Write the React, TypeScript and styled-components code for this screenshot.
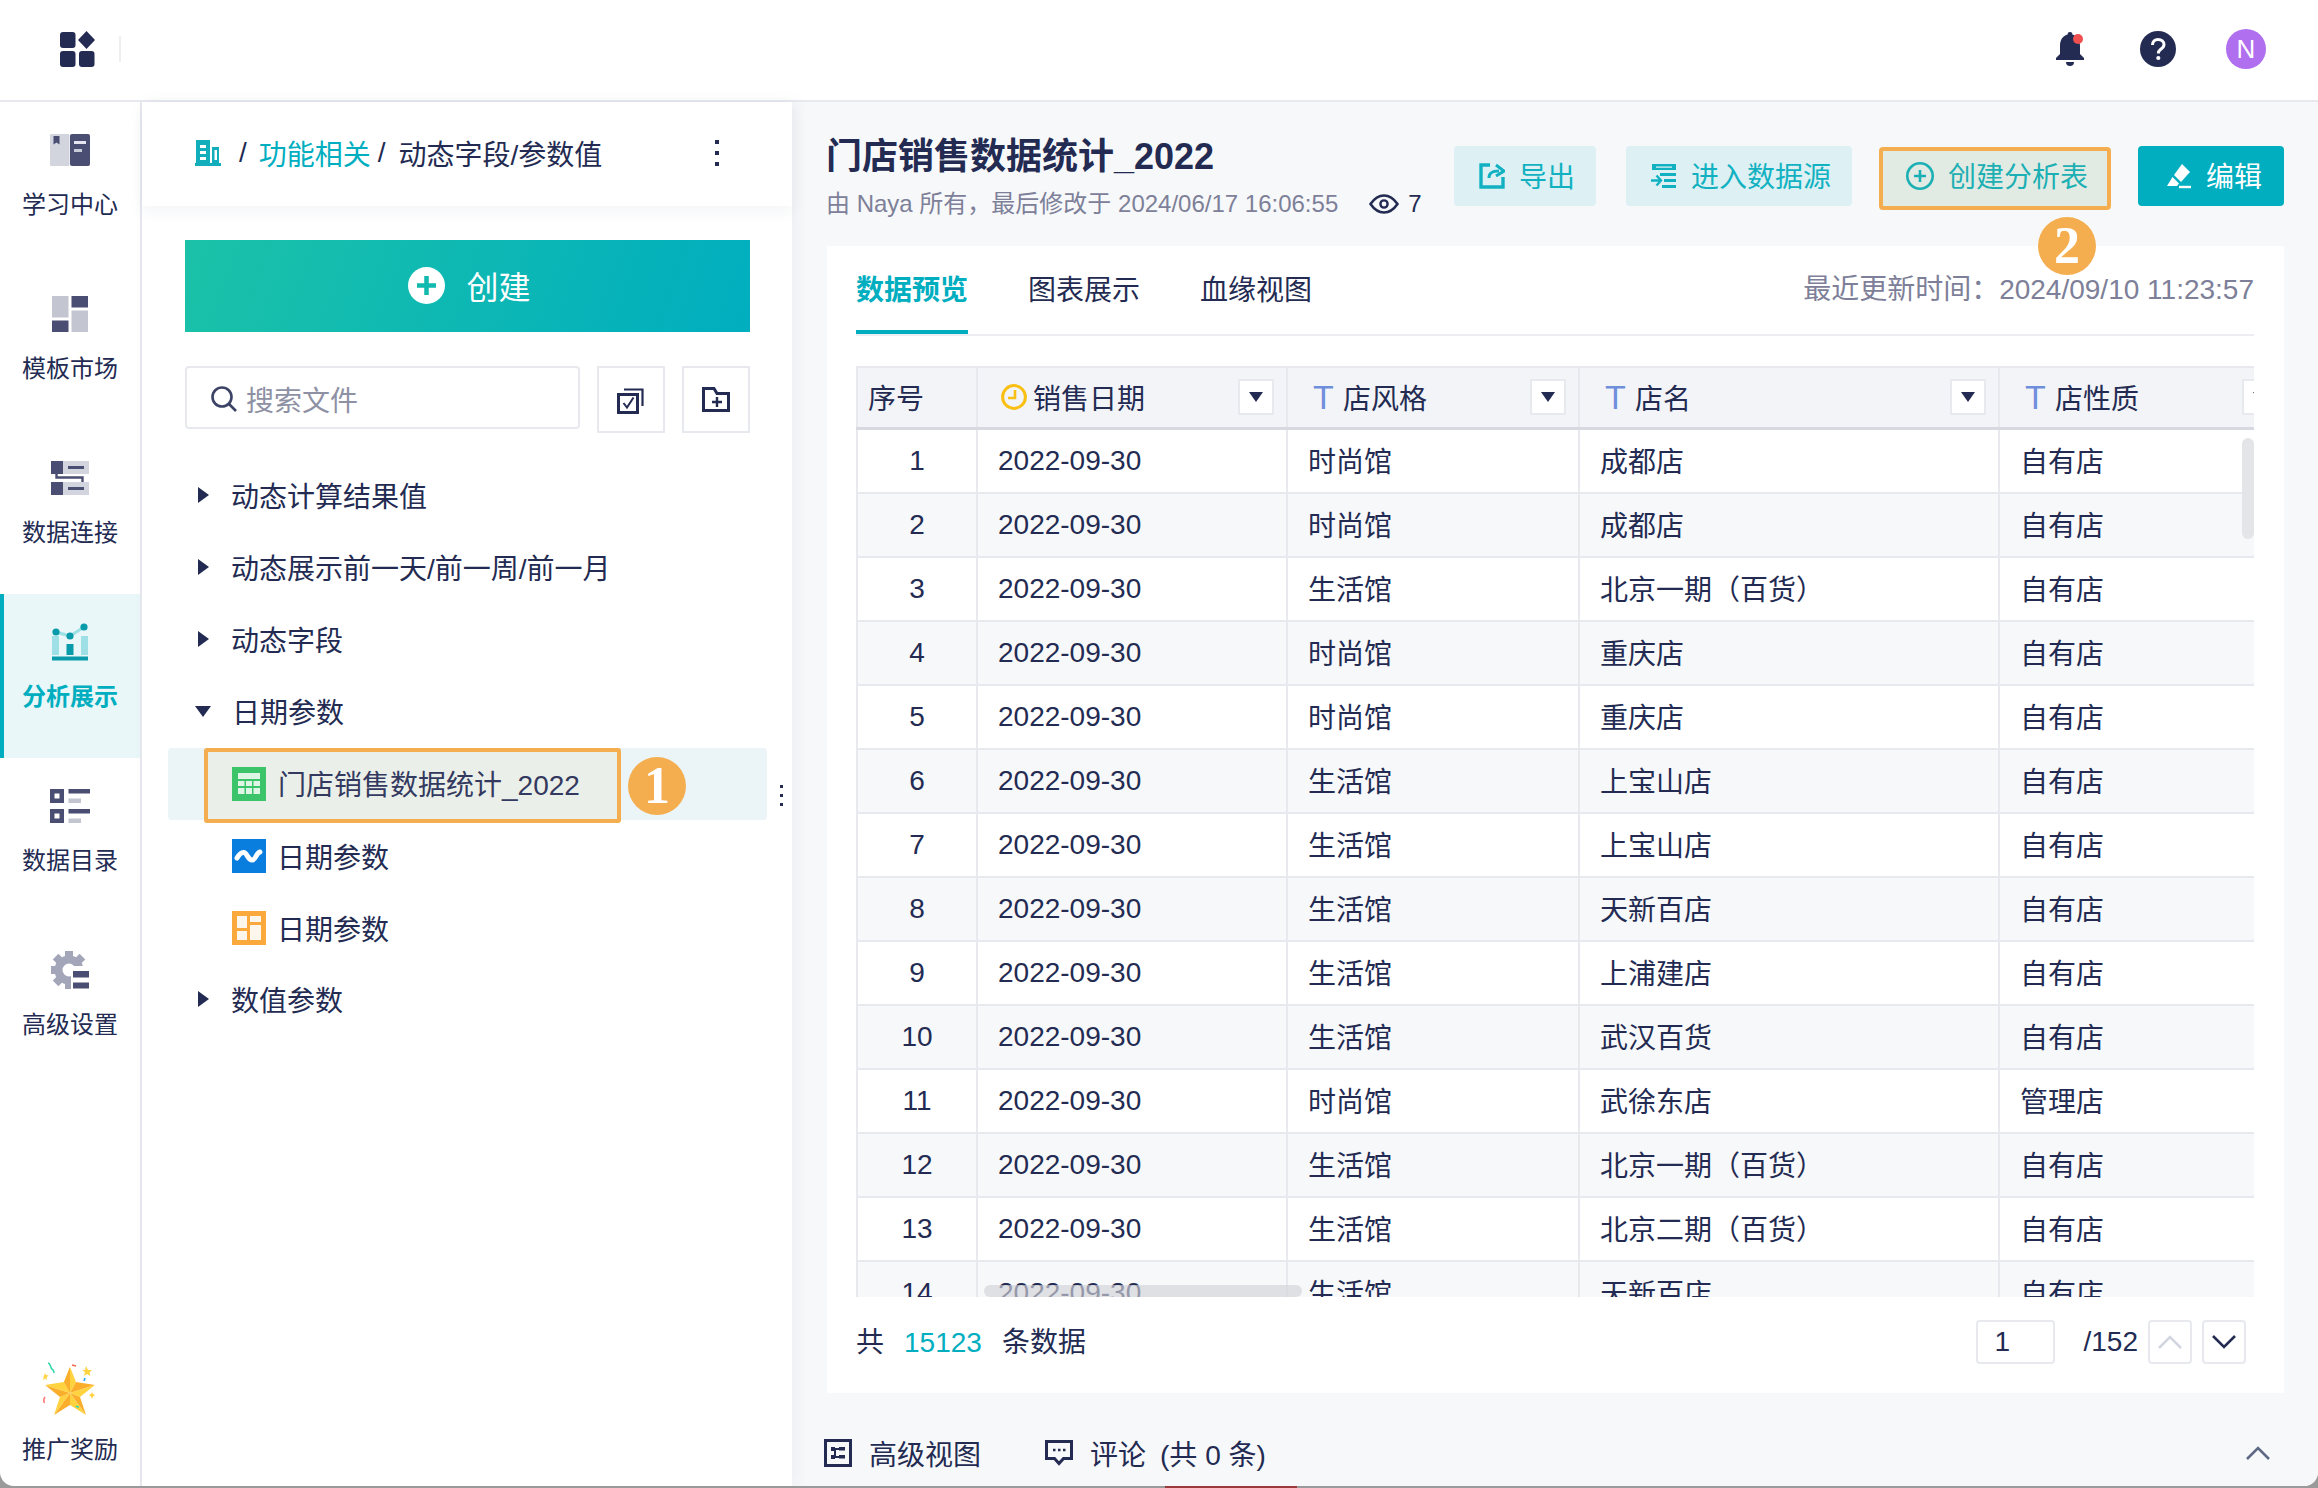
import React from 'react';
import styled, { createGlobalStyle } from 'styled-components';

const navy = '#232b52';
const teal = '#00aebf';
const line = '#e8e9ef';
const orange = '#f5ae4f';
const muted = '#7d8098';

const GlobalStyle = createGlobalStyle`
  html, body {
    margin: 0;
    width: 2318px;
    height: 1488px;
    overflow: hidden;
    background: #9a9a9a;
  }
  body {
    position: relative;
    font-family: "Liberation Sans", "Noto Sans CJK SC", sans-serif;
    font-size: 28px;
    color: ${navy};
  }
  * { box-sizing: border-box; }
`;

const DesktopSliver = styled.div`
  position: absolute;
  left: 1165px;
  bottom: 0;
  width: 132px;
  height: 2px;
  background: #9b3a3a;
`;

const Window = styled.div`
  position: relative;
  width: 2318px;
  height: 1486px;
  display: flex;
  flex-direction: column;
  background: #fff;
  border-radius: 0 0 14px 14px;
  overflow: hidden;
`;

const TopBar = styled.header`
  height: 102px;
  flex: none;
  display: flex;
  align-items: center;
  padding: 0 52px 2px 60px;
  border-bottom: 2px solid ${line};
`;

const LogoDivider = styled.div`
  width: 2px;
  height: 26px;
  margin-left: 24px;
  background: #eeeff3;
`;

const TopActions = styled.div`
  margin-left: auto;
  display: flex;
  align-items: center;
  gap: 50px;
`;

const BellWrap = styled.div`
  display: flex;
  margin-right: 4px;
`;

const Avatar = styled.div`
  width: 40px;
  height: 40px;
  border-radius: 50%;
  background: #b06fee;
  color: #fff;
  font-size: 26px;
  display: flex;
  align-items: center;
  justify-content: center;
`;

const Body = styled.div`
  flex: 1;
  display: flex;
  min-height: 0;
`;

const Sidebar = styled.nav`
  width: 142px;
  flex: none;
  display: flex;
  flex-direction: column;
  border-right: 2px solid ${line};
`;

const NavItem = styled.div<{ $active?: boolean }>`
  height: 164px;
  display: flex;
  flex-direction: column;
  align-items: center;
  gap: 20px;
  padding-top: 28px;
  font-size: 24px;
  line-height: 30px;
  color: ${p => (p.$active ? teal : navy)};
  font-weight: ${p => (p.$active ? 700 : 400)};
  background: ${p => (p.$active ? '#e9f7f9' : 'transparent')};
  border-left: 4px solid ${p => (p.$active ? teal : 'transparent')};
  padding-right: 4px;
`;

const NavIcon = styled.div`
  height: 40px;
  display: flex;
  align-items: center;
  justify-content: center;
`;

const PromoItem = styled.div`
  margin-top: auto;
  display: flex;
  flex-direction: column;
  align-items: center;
  gap: 17px;
  padding-bottom: 21px;
  font-size: 24px;
  line-height: 30px;
`;

const Panel = styled.aside`
  position: relative;
  z-index: 1;
  width: 650px;
  flex: none;
  background: #fff;
  box-shadow: 4px 0 14px rgba(40, 50, 90, 0.05);
`;

const Crumbs = styled.div`
  height: 104px;
  display: flex;
  align-items: center;
  padding: 0 73px 2px 53px;
  font-size: 28px;
  box-shadow: 0 6px 14px rgba(40, 50, 90, 0.05);
`;

const CrumbSep = styled.span<{ $left: number; $right: number }>`
  margin: 0 ${p => p.$right}px 0 ${p => p.$left}px;
`;

const CrumbLink = styled.span`
  color: ${teal};
`;

const Kebab = styled.div<{ $small?: boolean }>`
  display: flex;
  flex-direction: column;
  gap: ${p => (p.$small ? 6 : 7)}px;
  i {
    display: block;
    width: ${p => (p.$small ? 3 : 4)}px;
    height: ${p => (p.$small ? 3 : 4)}px;
    background: ${navy};
  }
`;

const CrumbMenu = styled(Kebab)`
  margin-left: auto;
`;

const CreateButton = styled.div`
  height: 92px;
  margin: 34px 42px 0 43px;
  display: flex;
  align-items: center;
  justify-content: center;
  gap: 21px;
  padding: 0 0 2px 4px;
  font-size: 32px;
  color: #fff;
  background: linear-gradient(110deg, #1bc2a8 0%, #00aebf 100%);
`;

const Toolbar = styled.div`
  height: 67px;
  margin: 34px 42px 0 43px;
  display: flex;
  gap: 17px;
  align-items: flex-start;
`;

const SearchBox = styled.div`
  width: 395px;
  height: 63px;
  display: flex;
  align-items: center;
  gap: 9px;
  padding: 2px 0 0 24px;
  border: 2px solid ${line};
  border-radius: 4px;
  color: #8e91a3;
`;

const ToolButton = styled.div`
  width: 68px;
  height: 67px;
  display: flex;
  align-items: center;
  justify-content: center;
  border: 2px solid ${line};
`;

const Tree = styled.div`
  margin-top: 27px;
`;

const TreeRow = styled.div<{ $open?: boolean }>`
  height: 72px;
  display: flex;
  align-items: center;
  gap: ${p => (p.$open ? 21 : 22)}px;
  padding: 0 0 2px ${p => (p.$open ? 53 : 56)}px;
  color: ${navy};
`;

const ArrowRight = styled.div`
  width: 0;
  height: 0;
  border-left: 11px solid ${navy};
  border-top: 8px solid transparent;
  border-bottom: 8px solid transparent;
`;

const ArrowDown = styled.div`
  width: 0;
  height: 0;
  border-top: 11px solid ${navy};
  border-left: 8.5px solid transparent;
  border-right: 8.5px solid transparent;
`;

const ChildRow = styled.div`
  height: 72px;
  display: flex;
  align-items: center;
  gap: 11px;
  padding-left: 90px;
`;

const SelectedRow = styled.div`
  position: relative;
  width: 599px;
  height: 72px;
  margin-left: 26px;
  display: flex;
  align-items: flex-start;
  gap: 7px;
  padding-left: 36px;
  background: #ebf4f7;
  border-radius: 4px;
`;

const Highlight = styled.div`
  width: 417px;
  height: 75px;
  flex: none;
  display: flex;
  align-items: center;
  gap: 12px;
  padding: 0 0 3px 24px;
  background: #ebefe9;
  border: 4px solid ${orange};
  border-radius: 3px;
  color: #33395f;
`;

const HighlightLabel = styled.span`
  padding-bottom: 2px;
`;

const Marker = styled.div`
  width: 58px;
  height: 58px;
  flex: none;
  border-radius: 50%;
  background: ${orange};
  color: #fff;
  font-family: "Liberation Serif", serif;
  font-size: 52px;
  font-weight: 700;
  line-height: 58px;
  text-align: center;
`;

const RowMarker = styled(Marker)`
  margin-top: 9px;
`;

const FloatingMarker = styled(Marker)`
  position: absolute;
  z-index: 2;
  left: 2038px;
  top: 217px;
`;

const RowKebab = styled(Kebab)`
  position: absolute;
  left: 612px;
  top: 37px;
`;

const Main = styled.main`
  flex: 1;
  min-width: 0;
  display: flex;
  flex-direction: column;
  padding: 0 34px 0 35px;
  background: #f7f8fa;
`;

const MainHeader = styled.div`
  height: 144px;
  flex: none;
  display: flex;
  align-items: flex-start;
`;

const TitleBlock = styled.div`
  margin-left: -1px;
  padding-top: 36px;
`;

const Title = styled.h1`
  margin: 0;
  font-size: 36px;
  line-height: 38px;
  font-weight: 700;
`;

const Meta = styled.div`
  margin-top: 13px;
  display: flex;
  align-items: center;
  font-size: 24px;
  line-height: 30px;
  color: ${muted};
`;

const Views = styled.span`
  margin-left: 31px;
  display: flex;
  align-items: center;
  gap: 9px;
  color: ${navy};
`;

const Actions = styled.div`
  margin-left: auto;
  padding-top: 44px;
  display: flex;
  align-items: flex-start;
  gap: 27px;
`;

const ActionButton = styled.div`
  height: 60px;
  display: flex;
  align-items: center;
  gap: 14px;
  padding: 0 21px 0 25px;
  border-radius: 4px;
  background: #ddf1f4;
  color: #12b1c1;
`;

const ActionLabel = styled.span`
  padding-bottom: 3px;
`;

const WideAction = styled(ActionButton)`
  margin-left: 3px;
`;

const MarkedAction = styled(ActionButton)`
  height: 63px;
  margin-top: 1px;
  padding: 0 19px 5px 23px;
  background: #e2ebe3;
  border: 4px solid ${orange};
  color: #1cafb3;
`;

const PrimaryAction = styled(ActionButton)`
  padding-left: 28px;
  padding-right: 22px;
  background: ${teal};
  color: #fff;
`;

const Card = styled.section`
  height: 1147px;
  flex: none;
  display: flex;
  flex-direction: column;
  padding: 0 30px 0 29px;
  background: #fff;
`;

const TabBar = styled.div`
  height: 90px;
  flex: none;
  display: flex;
  align-items: flex-start;
  gap: 60px;
  border-bottom: 2px solid #eceef2;
`;

const Tab = styled.div<{ $active?: boolean }>`
  height: 88px;
  display: flex;
  align-items: center;
  border-bottom: 4px solid ${p => (p.$active ? teal : 'transparent')};
  color: ${p => (p.$active ? teal : navy)};
  font-weight: ${p => (p.$active ? 700 : 400)};
`;

const UpdatedAt = styled.div`
  height: 88px;
  margin-left: auto;
  display: flex;
  align-items: center;
  padding-bottom: 6px;
  color: ${muted};
`;

const TableWrap = styled.div`
  position: relative;
  height: 931px;
  margin-top: 30px;
  flex: none;
  overflow: hidden;
`;

const HeadRow = styled.div`
  width: 1436px;
  height: 64px;
  display: flex;
  background: #f3f4f8;
  border-top: 2px solid ${line};
  border-bottom: 3px solid #d8d9e0;
`;

const DataRow = styled.div<{ $shade: boolean }>`
  width: 1436px;
  height: 64px;
  display: flex;
  background: ${p => (p.$shade ? '#f7f8fa' : '#fff')};
  border-bottom: 2px solid ${line};
`;

const Cell = styled.div<{ $width: number; $center?: boolean; $cjk?: boolean }>`
  width: ${p => p.$width}px;
  flex: none;
  display: flex;
  align-items: center;
  justify-content: ${p => (p.$center ? 'center' : 'flex-start')};
  padding-left: ${p => (p.$center ? 0 : 20)}px;
  padding-bottom: ${p => (p.$cjk ? 3 : 1)}px;
  border-right: 2px solid ${line};
  &:first-child {
    border-left: 2px solid ${line};
  }
`;

const HeadCell = styled(Cell)<{ $pad?: number }>`
  padding-left: ${p => p.$pad ?? 25}px;
  padding-right: 12px;
  gap: 8px;
`;

const ClockWrap = styled.span`
  display: flex;
  margin-right: -2px;
`;

const TypeT = styled.span`
  width: 22px;
  font-size: 34px;
  line-height: 34px;
  color: #6f8fdc;
`;

const HeadFilter = styled.div`
  width: 36px;
  height: 36px;
  flex: none;
  margin-left: auto;
  display: flex;
  align-items: center;
  justify-content: center;
  background: #fff;
  border: 2px solid ${line};
`;

const FilterArrow = styled.div`
  width: 0;
  height: 0;
  border-top: 10px solid ${navy};
  border-left: 7px solid transparent;
  border-right: 7px solid transparent;
`;

const ScrollY = styled.div`
  position: absolute;
  top: 72px;
  right: 0;
  width: 12px;
  height: 101px;
  border-radius: 6px;
  background: #e4e5e9;
`;

const ScrollX = styled.div`
  position: absolute;
  left: 128px;
  bottom: 0;
  width: 318px;
  height: 12px;
  border-radius: 6px;
  background: rgba(210, 211, 216, 0.65);
`;

const Footer = styled.div`
  flex: none;
  display: flex;
  align-items: flex-start;
  gap: 20px;
  padding: 23px 8px 0 0;
  line-height: 46px;
`;

const Count = styled.span`
  color: ${teal};
`;

const Pager = styled.div`
  margin-left: auto;
  display: flex;
  align-items: center;
`;

const PageInput = styled.div`
  width: 79px;
  height: 44px;
  margin-right: 29px;
  padding-left: 17px;
  line-height: 40px;
  border: 2px solid ${line};
  border-radius: 4px;
`;

const PageTotal = styled.span`
  margin-right: 10px;
  line-height: 44px;
`;

const PageButton = styled.div`
  width: 44px;
  height: 44px;
  margin-right: 10px;
  display: flex;
  align-items: center;
  justify-content: center;
  border: 2px solid ${line};
  border-radius: 4px;
  &:last-child {
    margin-right: 0;
  }
`;

const BottomBar = styled.div`
  display: flex;
  align-items: center;
  height: 28px;
  margin: 46px 14px 0 -3px;
`;

const BottomItem = styled.div`
  display: flex;
  align-items: center;
  gap: 17px;
  margin-right: 64px;
`;

const CommentCount = styled.span`
  padding-left: 14px;
`;

const BottomToggle = styled.div`
  margin-left: auto;
  display: flex;
`;

const LogoIcon = () => (
  <svg width="35" height="36" viewBox="0 0 35 36">
    <g fill={navy}>
      <rect x="0" y="1" width="15.5" height="16" rx="3" />
      <path d="M26.5 0 L35 9 L26.5 18 L18 9 Z" />
      <rect x="0" y="20" width="15.5" height="16" rx="3" />
      <rect x="19" y="20" width="15.5" height="16" rx="3" />
    </g>
  </svg>
);

const BellIcon = () => (
  <svg width="30" height="34" viewBox="0 0 30 34">
    <path d="M14 0 a2.4 2.4 0 0 1 2.4 2.6 C22 4 24 9 24 14 L24 22 L28 26 L28 28 L0 28 L0 26 L4 22 L4 14 C4 9 6 4 11.6 2.6 A2.4 2.4 0 0 1 14 0 Z" fill={navy} />
    <path d="M10 30 L18 30 A4 4 0 0 1 10 30 Z" fill={navy} />
    <circle cx="22" cy="7" r="5" fill="#ef4f4f" />
  </svg>
);

const HelpIcon = () => (
  <svg width="36" height="36" viewBox="0 0 36 36">
    <circle cx="18" cy="18" r="18" fill={navy} />
    <path d="M12.5 14 C12.5 10.5 15 8.5 18 8.5 C21.5 8.5 24 10.5 24 13.6 C24 16.5 21.8 17.6 20.2 18.8 C19 19.7 18.4 20.4 18.4 22.6" fill="none" stroke="#fff" strokeWidth="3" />
    <circle cx="18.3" cy="27" r="2.1" fill="#fff" />
  </svg>
);

const dark = '#4a4e72';
const pale = '#d2d4de';
const paler = '#c3c5d1';

const LearnIcon = () => (
  <svg width="40" height="32" viewBox="0 0 40 32">
    <rect x="0" y="0" width="19.5" height="32" rx="1" fill={pale} />
    <path d="M3.5 2 H9.5 V10.5 L6.5 8.5 L3.5 10.5 Z" fill={dark} />
    <rect x="20" y="0" width="20" height="32" rx="2" fill={dark} />
    <rect x="24" y="7" width="12" height="3" fill="#e6e7ee" />
    <rect x="24" y="15" width="8" height="3" fill="#c9cbd8" />
  </svg>
);

const MarketIcon = () => (
  <svg width="36" height="36" viewBox="0 0 36 36">
    <rect x="0" y="0" width="16.5" height="21.5" fill={paler} />
    <rect x="19.5" y="0" width="16.5" height="11.5" fill={dark} />
    <rect x="0" y="24.5" width="16.5" height="11.5" fill={dark} />
    <rect x="19.5" y="14.5" width="16.5" height="21.5" fill={paler} />
  </svg>
);

const ConnectIcon = () => (
  <svg width="38" height="34" viewBox="0 0 38 34">
    <rect x="0" y="0" width="38" height="13" fill={pale} />
    <rect x="0" y="21" width="38" height="13" fill={pale} />
    <rect x="0" y="0" width="12" height="13" fill={dark} />
    <rect x="0" y="21" width="12" height="13" fill={dark} />
    <rect x="17" y="5" width="16" height="3" fill={dark} />
    <rect x="17" y="26" width="16" height="3" fill={dark} />
    <path d="M5.5 13 V16.5 H31.5 V21" fill="none" stroke={dark} strokeWidth="2.4" />
  </svg>
);

const AnalysisIcon = () => (
  <svg width="36" height="38" viewBox="0 0 36 38">
    <rect x="0" y="13" width="7" height="19" fill="#9fe0e6" />
    <rect x="14.5" y="21" width="7" height="11" fill="#0a9bab" />
    <rect x="29" y="13" width="7" height="19" fill="#9fe0e6" />
    <rect x="0" y="33.5" width="36" height="4" fill="#0a9bab" />
    <path d="M4 9 L18 13 L32 4" fill="none" stroke="#9fe0e6" strokeWidth="3" />
    <circle cx="4" cy="9" r="3.6" fill="#0a9bab" />
    <circle cx="18" cy="13" r="3.6" fill="#0a9bab" />
    <circle cx="32" cy="4" r="3.6" fill="#0a9bab" />
  </svg>
);

const CatalogIcon = () => (
  <svg width="40" height="34" viewBox="0 0 40 34">
    <path d="M0 0 H14 V14 H0 Z M4.5 4.5 V9.5 H9.5 V4.5 Z" fill={dark} fillRule="evenodd" />
    <path d="M0 20 H14 V34 H0 Z M4.5 24.5 V29.5 H9.5 V24.5 Z" fill={dark} fillRule="evenodd" />
    <rect x="18.5" y="0" width="21.5" height="4.5" fill={dark} />
    <rect x="18.5" y="9.5" width="12.5" height="4.5" fill={paler} />
    <rect x="18.5" y="20" width="21.5" height="4.5" fill={dark} />
    <rect x="18.5" y="29.5" width="12.5" height="4.5" fill={paler} />
  </svg>
);

const SettingsIcon = () => (
  <svg width="38" height="38" viewBox="0 0 38 38">
    <g fill="#a3a6b8">
      {[0, 45, 90, 135, 180, 225, 270, 315].map(a => (
        <rect key={a} x="14" y="0" width="8" height="7" transform={`rotate(${a} 18 19)`} />
      ))}
    </g>
    <circle cx="18" cy="19" r="10.5" fill="none" stroke="#a3a6b8" strokeWidth="8" />
    <rect x="20" y="15" width="18" height="23" fill="#fff" />
    <rect x="22" y="20" width="16" height="6.5" fill={dark} />
    <rect x="22" y="31.5" width="16" height="6" fill={dark} />
  </svg>
);

const StarIcon = () => (
  <svg width="54" height="56" viewBox="0 0 54 56">
    <path d="M27 5 L33 20 L27 31 L21 20 Z" fill="#ffd23f" />
    <path d="M33 20 L52 23 L27 31 Z" fill="#fbae2c" />
    <path d="M52 23 L37 35 L27 31 Z" fill="#ffd23f" />
    <path d="M37 35 L43 53 L27 31 Z" fill="#fbae2c" />
    <path d="M43 53 L27 43 L27 31 Z" fill="#ffd23f" />
    <path d="M27 43 L11 53 L27 31 Z" fill="#fbae2c" />
    <path d="M11 53 L17 35 L27 31 Z" fill="#ffd23f" />
    <path d="M17 35 L2 23 L27 31 Z" fill="#fbae2c" />
    <path d="M2 23 L21 20 L27 31 Z" fill="#ffd23f" />
    <path d="M27 5 L21 20 L27 31 Z" fill="#fbae2c" />
    <path d="M5 1 C9 2 6 6 10 8 C11 9 11 10 11 11" fill="none" stroke="#2ed8a8" strokeWidth="1.6" />
    <path d="M29 3 L33 4" fill="none" stroke="#f0684e" strokeWidth="1.6" />
    <path d="M43 4 L45 8 L49 8 L46.5 10.5 L47.5 14 L44 12 L41 14 L42 10 L39 8 L42 8 Z" fill="#ffd23f" />
    <path d="M2 11 L3 13 L5.5 13.5 L3.5 15.5 L4 18 L2 16.5 L0 18 L0.5 15.5 Z" fill="#ffd23f" />
    <path d="M42 16 L41 19" fill="none" stroke="#2aa7ee" strokeWidth="1.6" />
    <path d="M2 35 C0.5 37 0.5 39 1.5 41" fill="none" stroke="#f77" strokeWidth="1.6" />
    <path d="M49 30 L50 32 L52 33 L50 34.5 L49 37 L48 34.5 L46 33 L48 32 Z" fill="#ffd23f" />
    <path d="M33 44 C34 45 35 45 36 45" fill="none" stroke="#2ed8a8" strokeWidth="1.6" />
  </svg>
);

const HomeIcon = () => (
  <svg width="26" height="26" viewBox="0 0 26 26">
    <path d="M1 0 H15 V23 H26 V26 H0 V23 H1 Z M5 5 V8 H11 V5 Z M5 11 V14 H11 V11 Z M5 17 V20 H11 V17 Z" fill="#12aebb" fillRule="evenodd" />
    <rect x="17" y="7" width="7" height="16" fill="#12aebb" />
    <rect x="19.5" y="10" width="2.5" height="10" fill="#fff" />
  </svg>
);

const PlusDisc = () => (
  <svg width="37" height="37" viewBox="0 0 37 37">
    <circle cx="18.5" cy="18.5" r="18.5" fill="#fff" />
    <path d="M18.5 9 V28 M9 18.5 H28" stroke="#11b9ae" strokeWidth="4.5" />
  </svg>
);

const SearchIcon = () => (
  <svg width="26" height="26" viewBox="0 0 26 26">
    <circle cx="11" cy="11" r="9.5" fill="none" stroke="#3c4366" strokeWidth="2.6" />
    <path d="M18 18 L25 25" stroke="#3c4366" strokeWidth="2.6" />
  </svg>
);

const CheckCopyIcon = () => (
  <svg width="28" height="28" viewBox="0 0 28 28">
    <rect x="1.5" y="8.5" width="19" height="18" fill="none" stroke={navy} strokeWidth="3" />
    <path d="M6.5 17 L10 21.5 L16.5 11.5" fill="none" stroke={navy} strokeWidth="2" />
    <path d="M7 3.5 H25.5 V20" fill="none" stroke={navy} strokeWidth="2.2" />
  </svg>
);

const FolderPlusIcon = () => (
  <svg width="28" height="25" viewBox="0 0 28 25">
    <path d="M1.5 1.5 H12 L15 6.5 H26.5 V23.5 H1.5 Z" fill="none" stroke={navy} strokeWidth="3" />
    <path d="M15 10 V20 M10 15 H20" stroke={navy} strokeWidth="2.4" />
  </svg>
);

const SheetIcon = () => (
  <svg width="34" height="34" viewBox="0 0 34 34">
    <rect width="34" height="34" fill="#3bc46a" />
    <rect x="6" y="6" width="22" height="6" fill="#dff5e6" />
    <path d="M6 14 H12.5 V19 H6 Z M14 14 H20 V19 H14 Z M21.5 14 H28 V19 H21.5 Z M6 21 H12.5 V27 H6 Z M14 21 H20 V27 H14 Z M21.5 21 H28 V27 H21.5 Z" fill="#dff5e6" />
  </svg>
);

const ChartIcon = () => (
  <svg width="34" height="34" viewBox="0 0 34 34">
    <rect width="34" height="34" fill="#0a7ede" />
    <path d="M5 19 C8 14 10 13 12 13.5 C15 14 16 21 20 21 C24 21 24 14 28 13" fill="none" stroke="#fff" strokeWidth="5" strokeLinecap="round" />
  </svg>
);

const BoardIcon = () => (
  <svg width="34" height="34" viewBox="0 0 34 34">
    <rect width="34" height="34" fill="#fba83c" />
    <rect x="5" y="5" width="10" height="12" fill="#fdf6ec" />
    <rect x="18" y="5" width="11" height="6" fill="#fdf6ec" />
    <rect x="5" y="20" width="10" height="9" fill="#fdf6ec" />
    <rect x="18" y="14" width="11" height="15" fill="#fdf6ec" />
  </svg>
);

const EyeIcon = () => (
  <svg width="30" height="20" viewBox="0 0 30 20">
    <path d="M1.5 10 C6 3.5 10 1.5 15 1.5 C20 1.5 24 3.5 28.5 10 C24 16.5 20 18.5 15 18.5 C10 18.5 6 16.5 1.5 10 Z" fill="none" stroke={navy} strokeWidth="2.6" />
    <circle cx="15" cy="10" r="3.6" fill="none" stroke={navy} strokeWidth="2.4" />
  </svg>
);

const ExportIcon = () => (
  <svg width="26" height="26" viewBox="0 0 26 26">
    <path d="M11 2 H2 V24 H24 V14" fill="none" stroke="#12b1c1" strokeWidth="3.4" />
    <path d="M10 15 C10 10 13 8 20 8" fill="none" stroke="#12b1c1" strokeWidth="3" />
    <path d="M17 2 L25 8 L17 13" fill="none" stroke="#12b1c1" strokeWidth="3" />
  </svg>
);

const SourceIcon = () => (
  <svg width="26" height="26" viewBox="0 0 26 26">
    <path d="M1 1 H25 V7 H1 Z M5 3.4 V4.8 H21 V3.4 Z" fill="#12b1c1" fillRule="evenodd" />
    <rect x="9" y="10" width="16" height="3" fill="#12b1c1" />
    <rect x="13" y="16" width="12" height="3" fill="#12b1c1" />
    <rect x="11" y="22" width="14" height="3" fill="#12b1c1" />
    <path d="M0 17.5 H9 M5.5 12.5 L10 17.5 L5.5 22.5" fill="none" stroke="#12b1c1" strokeWidth="2.4" />
  </svg>
);

const PlusCircleIcon = () => (
  <svg width="28" height="28" viewBox="0 0 28 28">
    <circle cx="14" cy="14" r="12.7" fill="none" stroke="#1cafb3" strokeWidth="2.6" />
    <path d="M14 8 V20 M8 14 H20" stroke="#1cafb3" strokeWidth="2.6" />
  </svg>
);

const EditIcon = () => (
  <svg width="26" height="26" viewBox="0 0 26 26">
    <path d="M16 1 L24 9 L15 19 L8 12 Z" fill="#fff" />
    <path d="M6.5 14 L13 20.5 L11 23 L1 23 Z" fill="#fff" />
    <path d="M13 24 H25" stroke="#fff" strokeWidth="2.4" />
  </svg>
);

const ClockIcon = () => (
  <svg width="26" height="26" viewBox="0 0 26 26">
    <circle cx="13" cy="13" r="11.4" fill="none" stroke="#f9bf12" strokeWidth="3" />
    <path d="M14 6 V14 H7" fill="none" stroke="#f9bf12" strokeWidth="2.6" />
  </svg>
);

const ViewTreeIcon = () => (
  <svg width="28" height="28" viewBox="0 0 28 28">
    <rect x="1.5" y="1.5" width="25" height="25" fill="none" stroke={navy} strokeWidth="3" />
    <rect x="7" y="8" width="4" height="4" fill={navy} />
    <rect x="7" y="16" width="4" height="4" fill={navy} />
    <rect x="15" y="8" width="6" height="3.5" fill={navy} />
    <rect x="15" y="16" width="6" height="3.5" fill={navy} />
    <path d="M9 10 H15 M9 18 H15 M11 10 V18" stroke={navy} strokeWidth="2" />
  </svg>
);

const CommentIcon = () => (
  <svg width="28" height="26" viewBox="0 0 28 26">
    <path d="M1.5 1.5 H26.5 V18.5 H18.5 L14 23.5 L9.5 18.5 H1.5 Z" fill="none" stroke={navy} strokeWidth="3" />
    <path d="M8 10 H10.5 M13 10 H15.5 M18 10 H20.5" stroke={navy} strokeWidth="2.6" />
  </svg>
);

const Chevron = ({ up, color }: { up?: boolean; color: string }) => (
  <svg width="24" height="14" viewBox="0 0 24 14">
    <path d={up ? 'M1 13 L12 2 L23 13' : 'M1 1 L12 12 L23 1'} fill="none" stroke={color} strokeWidth="2.6" />
  </svg>
);

const navItems = [
  { label: '学习中心', icon: <LearnIcon /> },
  { label: '模板市场', icon: <MarketIcon /> },
  { label: '数据连接', icon: <ConnectIcon /> },
  { label: '分析展示', icon: <AnalysisIcon />, active: true },
  { label: '数据目录', icon: <CatalogIcon /> },
  { label: '高级设置', icon: <SettingsIcon /> },
];

const columnWidths = [122, 310, 292, 420, 292];

const rows = [
  ['时尚馆', '成都店', '自有店'],
  ['时尚馆', '成都店', '自有店'],
  ['生活馆', '北京一期（百货）', '自有店'],
  ['时尚馆', '重庆店', '自有店'],
  ['时尚馆', '重庆店', '自有店'],
  ['生活馆', '上宝山店', '自有店'],
  ['生活馆', '上宝山店', '自有店'],
  ['生活馆', '天新百店', '自有店'],
  ['生活馆', '上浦建店', '自有店'],
  ['生活馆', '武汉百货', '自有店'],
  ['时尚馆', '武徐东店', '管理店'],
  ['生活馆', '北京一期（百货）', '自有店'],
  ['生活馆', '北京二期（百货）', '自有店'],
  ['生活馆', '天新百店', '自有店'],
];

const Dots = () => (
  <>
    <i />
    <i />
    <i />
  </>
);

export default function App() {
  return (
    <>
      <GlobalStyle />
      <DesktopSliver />
      <Window>
        <TopBar>
          <LogoIcon />
          <LogoDivider />
          <TopActions>
            <BellWrap>
              <BellIcon />
            </BellWrap>
            <HelpIcon />
            <Avatar>N</Avatar>
          </TopActions>
        </TopBar>
        <FloatingMarker>2</FloatingMarker>
        <Body>
          <Sidebar>
            {navItems.map(item => (
              <NavItem key={item.label} $active={item.active}>
                <NavIcon>{item.icon}</NavIcon>
                {item.label}
              </NavItem>
            ))}
            <PromoItem>
              <StarIcon />
              推广奖励
            </PromoItem>
          </Sidebar>
          <Panel>
            <Crumbs>
              <HomeIcon />
              <CrumbSep $left={18} $right={12}>/</CrumbSep>
              <CrumbLink>功能相关</CrumbLink>
              <CrumbSep $left={7} $right={13}>/</CrumbSep>
              动态字段/参数值
              <CrumbMenu>
                <Dots />
              </CrumbMenu>
            </Crumbs>
            <CreateButton>
              <PlusDisc />
              创建
            </CreateButton>
            <Toolbar>
              <SearchBox>
                <SearchIcon />
                搜索文件
              </SearchBox>
              <ToolButton>
                <CheckCopyIcon />
              </ToolButton>
              <ToolButton>
                <FolderPlusIcon />
              </ToolButton>
            </Toolbar>
            <Tree>
              <TreeRow>
                <ArrowRight />
                动态计算结果值
              </TreeRow>
              <TreeRow>
                <ArrowRight />
                动态展示前一天/前一周/前一月
              </TreeRow>
              <TreeRow>
                <ArrowRight />
                动态字段
              </TreeRow>
              <TreeRow $open>
                <ArrowDown />
                日期参数
              </TreeRow>
              <SelectedRow>
                <Highlight>
                  <SheetIcon />
                  <HighlightLabel>门店销售数据统计_2022</HighlightLabel>
                </Highlight>
                <RowMarker>1</RowMarker>
                <RowKebab $small>
                  <Dots />
                </RowKebab>
              </SelectedRow>
              <ChildRow>
                <ChartIcon />
                日期参数
              </ChildRow>
              <ChildRow>
                <BoardIcon />
                日期参数
              </ChildRow>
              <TreeRow>
                <ArrowRight />
                数值参数
              </TreeRow>
            </Tree>
          </Panel>
          <Main>
            <MainHeader>
              <TitleBlock>
                <Title>门店销售数据统计_2022</Title>
                <Meta>
                  由 Naya 所有，最后修改于 2024/06/17 16:06:55
                  <Views>
                    <EyeIcon />7
                  </Views>
                </Meta>
              </TitleBlock>
              <Actions>
                <ActionButton>
                  <ExportIcon />
                  <ActionLabel>导出</ActionLabel>
                </ActionButton>
                <WideAction>
                  <SourceIcon />
                  <ActionLabel>进入数据源</ActionLabel>
                </WideAction>
                <MarkedAction>
                  <PlusCircleIcon />
                  <ActionLabel>创建分析表</ActionLabel>
                </MarkedAction>
                <PrimaryAction>
                  <EditIcon />
                  <ActionLabel>编辑</ActionLabel>
                </PrimaryAction>
              </Actions>
            </MainHeader>
            <Card>
              <TabBar>
                <Tab $active>数据预览</Tab>
                <Tab>图表展示</Tab>
                <Tab>血缘视图</Tab>
                <UpdatedAt>最近更新时间：2024/09/10 11:23:57</UpdatedAt>
              </TabBar>
              <TableWrap>
                <HeadRow>
                  <HeadCell $width={columnWidths[0]} $pad={10}>序号</HeadCell>
                  <HeadCell $width={columnWidths[1]} $pad={23}>
                    <ClockWrap><ClockIcon /></ClockWrap>
                    销售日期
                    <HeadFilter><FilterArrow /></HeadFilter>
                  </HeadCell>
                  <HeadCell $width={columnWidths[2]}>
                    <TypeT>T</TypeT>
                    店风格
                    <HeadFilter><FilterArrow /></HeadFilter>
                  </HeadCell>
                  <HeadCell $width={columnWidths[3]}>
                    <TypeT>T</TypeT>
                    店名
                    <HeadFilter><FilterArrow /></HeadFilter>
                  </HeadCell>
                  <HeadCell $width={columnWidths[4]}>
                    <TypeT>T</TypeT>
                    店性质
                    <HeadFilter><FilterArrow /></HeadFilter>
                  </HeadCell>
                </HeadRow>
                {rows.map((row, i) => (
                  <DataRow key={i} $shade={i % 2 === 1}>
                    <Cell $width={columnWidths[0]} $center>{i + 1}</Cell>
                    <Cell $width={columnWidths[1]}>2022-09-30</Cell>
                    <Cell $width={columnWidths[2]} $cjk>{row[0]}</Cell>
                    <Cell $width={columnWidths[3]} $cjk>{row[1]}</Cell>
                    <Cell $width={columnWidths[4]} $cjk>{row[2]}</Cell>
                  </DataRow>
                ))}
                <ScrollY />
                <ScrollX />
              </TableWrap>
              <Footer>
                <span>共</span>
                <Count>15123</Count>
                <span>条数据</span>
                <Pager>
                  <PageInput>1</PageInput>
                  <PageTotal>/152</PageTotal>
                  <PageButton><Chevron up color="#d3d6e0" /></PageButton>
                  <PageButton><Chevron color={navy} /></PageButton>
                </Pager>
              </Footer>
            </Card>
            <BottomBar>
              <BottomItem>
                <ViewTreeIcon />
                高级视图
              </BottomItem>
              <BottomItem>
                <CommentIcon />
                <span>
                  评论<CommentCount>(共 0 条)</CommentCount>
                </span>
              </BottomItem>
              <BottomToggle>
                <Chevron up color="#5e6a85" />
              </BottomToggle>
            </BottomBar>
          </Main>
        </Body>
      </Window>
    </>
  );
}
